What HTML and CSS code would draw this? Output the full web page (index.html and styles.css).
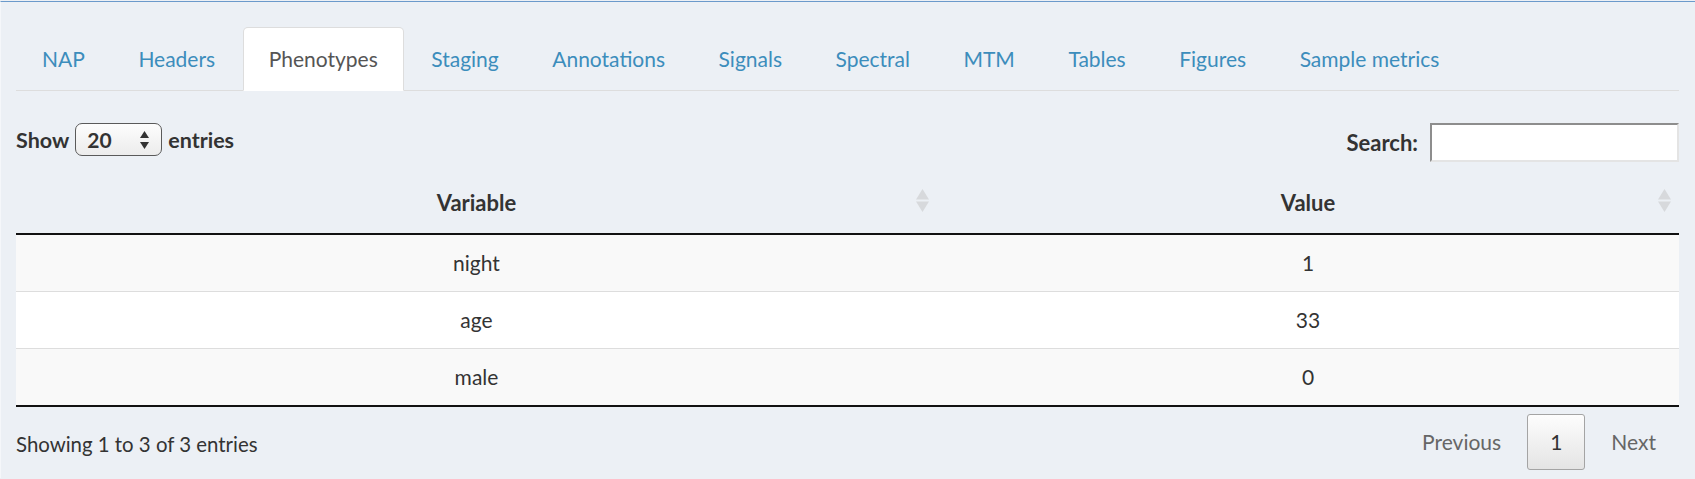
FILE: index.html
```html
<!DOCTYPE html>
<html>
<head>
<meta charset="utf-8">
<title>Phenotypes</title>
<link rel="stylesheet" href="styles.css">
</head>
<body>
<div class="page">
  <ul class="tabs">
    <li class="tab"><a>NAP</a></li>
    <li class="tab"><a>Headers</a></li>
    <li class="tab active"><a>Phenotypes</a></li>
    <li class="tab"><a>Staging</a></li>
    <li class="tab"><a>Annotations</a></li>
    <li class="tab"><a>Signals</a></li>
    <li class="tab"><a>Spectral</a></li>
    <li class="tab"><a>MTM</a></li>
    <li class="tab"><a>Tables</a></li>
    <li class="tab"><a>Figures</a></li>
    <li class="tab"><a>Sample metrics</a></li>
  </ul>
  <div class="tab-content">
    <div class="controls">
      <div class="length">
        <span>Show</span>
        <span class="select"><span class="select-value">20</span>
          <svg class="select-arrows" width="9" height="18" viewBox="0 0 9 18"><polygon points="4.5,0 9,7 0,7" fill="#333"/><polygon points="0,11 9,11 4.5,18" fill="#333"/></svg>
        </span>
        <span class="entries">entries</span>
      </div>
      <div class="filter">
        <span>Search:</span>
        <input class="search-input" type="search">
      </div>
    </div>
    <table class="datatable">
      <colgroup><col class="col-var"><col class="col-val"></colgroup>
      <thead>
        <tr>
          <th>Variable<svg class="sort" width="13" height="23" viewBox="0 0 13 23"><polygon points="6.5,0 13,10.5 0,10.5" /><polygon points="0,12.5 13,12.5 6.5,23" /></svg></th>
          <th>Value<svg class="sort" width="13" height="23" viewBox="0 0 13 23"><polygon points="6.5,0 13,10.5 0,10.5" /><polygon points="0,12.5 13,12.5 6.5,23" /></svg></th>
        </tr>
      </thead>
      <tbody>
        <tr class="odd"><td>night</td><td>1</td></tr>
        <tr class="even"><td>age</td><td>33</td></tr>
        <tr class="odd"><td>male</td><td>0</td></tr>
      </tbody>
    </table>
    <div class="footer">
      <div class="info">Showing 1 to 3 of 3 entries</div>
      <div class="paginate">
        <span class="pbtn disabled">Previous</span>
        <span class="pbtn current">1</span>
        <span class="pbtn disabled">Next</span>
      </div>
    </div>
  </div>
</div>
</body>
</html>
```

FILE: styles.css
```css
* { box-sizing: border-box; }
html, body { margin: 0; padding: 0; background: #ecf0f5; }
body {
  font-family: Lato, "Liberation Sans", sans-serif;
  font-size: 21px;
  color: #333;
  height: 479px;
  overflow: hidden;
}
.page {
  margin-top: 1px;
  border-top: 1px solid #6b9acb;
  border-left: 1px solid #f5f7fa;
  padding: 25px 16px 0 15px;
  height: 477px;
}
.tabs {
  list-style: none;
  margin: 0;
  padding: 0;
  display: flex;
  border-bottom: 1px solid #ddd;
}
.tab { margin: 0 1.5px -1px 0; }
.tab a {
  display: block;
  padding: 16px 25px;
  line-height: 30px;
  border: 1px solid transparent;
  border-radius: 5px 5px 0 0;
  color: #3c8dbc;
}
.tab.active a {
  background: #fff;
  border-color: #ddd;
  border-bottom-color: transparent;
  color: #555;
}
.controls {
  margin-top: 32px;
  display: flex;
  justify-content: space-between;
  align-items: flex-start;
  height: 39px;
}
.length {
  display: flex;
  align-items: center;
  height: 33px;
  font-weight: 700;
  font-size: 21.5px;
}
.select {
  margin: 0 6px 0 6px;
  width: 87px;
  height: 33px;
  border: 1px solid #5a5a5a;
  border-radius: 7px;
  background: linear-gradient(#fdfdfd, #ececec);
  display: flex;
  align-items: center;
  justify-content: space-between;
  padding: 0 12px 0 11px;
  font-size: 21px;
}
.select-value { line-height: 30px; }
.filter {
  display: flex;
  align-items: center;
  height: 39px;
  font-weight: 700;
  font-size: 22px;
}
.search-input {
  margin: 0 0 0 12px;
  width: 249px;
  height: 39px;
  border: 2px solid;
  border-color: #8d8d8d #e4e4e4 #e4e4e4 #8d8d8d;
  background: #fff;
  outline: none;
  padding: 0 4px;
}
.datatable {
  margin-top: 11px;
  width: 100%;
  border-collapse: separate;
  border-spacing: 0;
  table-layout: fixed;
}
.col-var { width: 921px; }
.datatable th {
  position: relative;
  padding: 15px;
  line-height: 30px;
  font-weight: 700;
  font-size: 22px;
  text-align: center;
  border-bottom: 2px solid #111;
}
.sort {
  position: absolute;
  right: 8px;
  top: 16px;
  fill: #d7d9dc;
}
.datatable td {
  padding: 13px 15px;
  line-height: 30px;
  text-align: center;
  border-top: 1px solid #ddd;
}
.datatable tbody tr:first-child td { border-top: none; }
.datatable tbody tr:last-child td { border-bottom: 2px solid #111; }
.datatable tr.odd td { background: #f9f9f9; }
.datatable tr.even td { background: #fff; }
.footer {
  margin-top: 7px;
  display: flex;
  justify-content: space-between;
  align-items: flex-start;
}
.info { padding-top: 15px; line-height: 30px; font-size: 20.4px; }
.paginate { display: flex; }
.pbtn {
  margin-left: 3px;
  padding: 12px 22px;
  line-height: 30px;
  border: 1px solid transparent;
  border-radius: 3px;
  color: #666;
}
.pbtn.current {
  color: #333;
  border-color: #a4a4a4;
  background: linear-gradient(#fdfdfd, #e4e4e4);
}
```
